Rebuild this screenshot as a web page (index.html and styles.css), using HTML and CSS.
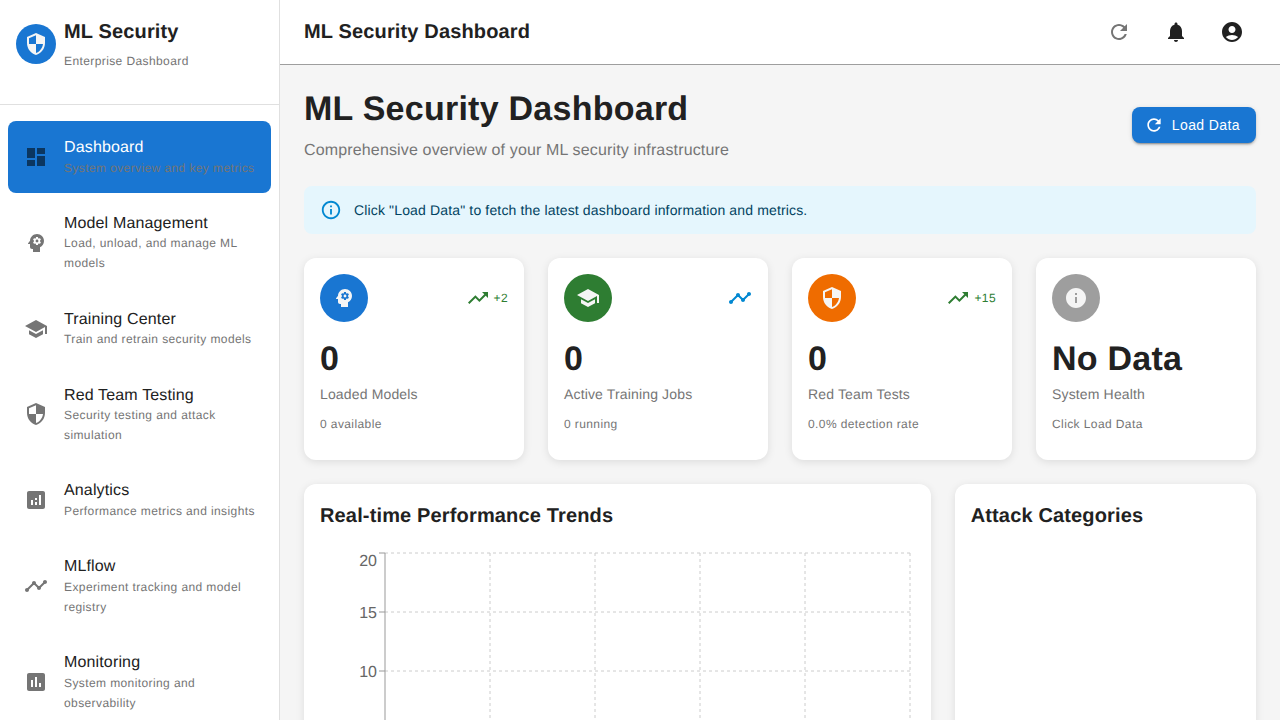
FILE: index.html
```html
<!DOCTYPE html>
<html>

<head>
  <meta charset="UTF-8">
  <meta name="viewport" content="width=device-width, initial-scale=1.0">
  <title>ML Security Dashboard</title>
  <link rel="stylesheet" href="styles.css">
</head>

<body>
  <svg class="sprite" xmlns="http://www.w3.org/2000/svg">
    <symbol id="i-security" viewBox="0 0 24 24"><path d="M12 1 3 5v6c0 5.55 3.84 10.74 9 12 5.16-1.26 9-6.45 9-12V5l-9-4zm0 10.99h7c-.53 4.12-3.28 7.79-7 8.94V12H5V6.3l7-3.11v8.8z"/></symbol>
    <symbol id="i-dashboard" viewBox="0 0 24 24"><path d="M3 13h8V3H3v10zm0 8h8v-6H3v6zm10 0h8V11h-8v10zm0-18v6h8V3h-8z"/></symbol>
    <symbol id="i-psychology" viewBox="0 0 24 24"><path d="M13 8.57c-.79 0-1.43.64-1.43 1.43s.64 1.43 1.43 1.43 1.43-.64 1.43-1.43-.64-1.43-1.43-1.43z"/><path d="M13 3C9.25 3 6.2 5.94 6.02 9.64L4.1 12.2c-.25.33-.01.8.4.8H6v3c0 1.1.9 2 2 2h1v3h7v-4.68c2.36-1.12 4-3.53 4-6.32 0-3.87-3.13-7-7-7zm3 7c0 .13-.01.26-.03.39l.83.66c.08.06.1.16.05.25l-.8 1.39c-.05.09-.16.12-.24.09l-.99-.4c-.21.16-.43.29-.67.39L14 13.83c-.01.1-.1.17-.2.17h-1.6c-.1 0-.18-.07-.2-.17l-.15-1.06c-.25-.1-.47-.23-.68-.39l-.99.4c-.09.03-.2 0-.25-.09l-.8-1.39c-.05-.08-.03-.19.05-.25l.84-.66c-.03-.13-.04-.26-.04-.39 0-.13.02-.27.04-.39l-.84-.66c-.08-.06-.1-.16-.05-.26l.8-1.38c.05-.09.15-.12.24-.09l1 .4c.2-.15.43-.29.67-.39L12 6.17c.02-.1.1-.17.2-.17h1.6c.1 0 .18.07.2.17l.15 1.06c.24.1.46.23.67.39l1-.4c.09-.03.2 0 .24.09l.8 1.38c.05.09.03.2-.05.26l-.83.66c.02.12.02.25.02.39z"/></symbol>
    <symbol id="i-school" viewBox="0 0 24 24"><path d="M5 13.18v4L12 21l7-3.82v-4L12 17l-7-3.82zM12 3 1 9l11 6 9-4.91V17h2V9L12 3z"/></symbol>
    <symbol id="i-analytics" viewBox="0 0 24 24"><path d="M19 3H5c-1.1 0-2 .9-2 2v14c0 1.1.9 2 2 2h14c1.1 0 2-.9 2-2V5c0-1.1-.9-2-2-2zM9 17H7v-5h2v5zm4 0h-2v-3h2v3zm0-5h-2v-2h2v2zm4 5h-2V7h2v10z"/></symbol>
    <symbol id="i-timeline" viewBox="0 0 24 24"><path d="M23 8c0 1.1-.9 2-2 2-.18 0-.35-.02-.51-.07l-3.56 3.55c.05.16.07.34.07.52 0 1.1-.9 2-2 2s-2-.9-2-2c0-.18.02-.36.07-.52l-2.55-2.55c-.16.05-.34.07-.52.07s-.36-.02-.52-.07l-4.55 4.56c.05.16.07.33.07.51 0 1.1-.9 2-2 2s-2-.9-2-2 .9-2 2-2c.18 0 .35.02.51.07l4.56-4.55C8.02 9.36 8 9.18 8 9c0-1.1.9-2 2-2s2 .9 2 2c0 .18-.02.36-.07.52l2.55 2.55c.16-.05.34-.07.52-.07s.36.02.52.07l3.55-3.56C19.02 8.35 19 8.18 19 8c0-1.1.9-2 2-2s2 .9 2 2z"/></symbol>
    <symbol id="i-assessment" viewBox="0 0 24 24"><path d="M19 3H5c-1.1 0-2 .9-2 2v14c0 1.1.9 2 2 2h14c1.1 0 2-.9 2-2V5c0-1.1-.9-2-2-2zM9 17H7v-7h2v7zm4 0h-2V7h2v10zm4 0h-2v-4h2v4z"/></symbol>
    <symbol id="i-refresh" viewBox="0 0 24 24"><path d="M17.65 6.35C16.2 4.9 14.21 4 12 4c-4.42 0-7.99 3.58-7.99 8s3.57 8 7.99 8c3.73 0 6.84-2.55 7.73-6h-2.08c-.82 2.33-3.04 4-5.65 4-3.31 0-6-2.69-6-6s2.69-6 6-6c1.66 0 3.14.69 4.22 1.78L13 11h7V4l-2.35 2.35z"/></symbol>
    <symbol id="i-bell" viewBox="0 0 24 24"><path d="M12 22c1.1 0 2-.9 2-2h-4c0 1.1.89 2 2 2zm6-6v-5c0-3.07-1.64-5.64-4.5-6.32V4c0-.83-.67-1.5-1.5-1.5s-1.5.67-1.5 1.5v.68C7.63 5.36 6 7.92 6 11v5l-2 2v1h16v-1l-2-2z"/></symbol>
    <symbol id="i-account" viewBox="0 0 24 24"><path d="M12 2C6.48 2 2 6.48 2 12s4.48 10 10 10 10-4.48 10-10S17.52 2 12 2zm0 4c1.93 0 3.5 1.57 3.5 3.5S13.93 13 12 13s-3.5-1.57-3.5-3.5S10.07 6 12 6zm0 14c-2.03 0-4.43-.82-6.14-2.88C7.55 15.8 9.68 15 12 15s4.45.8 6.14 2.12C16.43 19.18 14.03 20 12 20z"/></symbol>
    <symbol id="i-info-outline" viewBox="0 0 24 24"><path d="M11 7h2v2h-2zm0 4h2v6h-2zm1-9C6.48 2 2 6.48 2 12s4.48 10 10 10 10-4.48 10-10S17.52 2 12 2zm0 18c-4.41 0-8-3.59-8-8s3.59-8 8-8 8 3.59 8 8-3.59 8-8 8z"/></symbol>
    <symbol id="i-info" viewBox="0 0 24 24"><path d="M12 2C6.48 2 2 6.48 2 12s4.48 10 10 10 10-4.48 10-10S17.52 2 12 2zm1 15h-2v-6h2v6zm0-8h-2V7h2v2z"/></symbol>
    <symbol id="i-trending" viewBox="0 0 24 24"><path d="m16 6 2.29 2.29-4.88 4.88-4-4L2 16.59 3.41 18l6-6 4 4 6.3-6.29L22 12V6z"/></symbol>
  </svg>

  <div class="app">
    <aside class="sidebar">
      <div class="brand">
        <div class="avatar avatar-small avatar-blue"><svg class="icon"><use href="#i-security"/></svg></div>
        <div>
          <div class="brand-name">ML Security</div>
          <div class="brand-sub">Enterprise Dashboard</div>
        </div>
      </div>
      <nav class="nav">
        <a class="nav-item active">
          <svg class="icon nav-icon"><use href="#i-dashboard"/></svg>
          <div class="nav-text">
            <div class="nav-title">Dashboard</div>
            <div class="nav-sub">System overview and key metrics</div>
          </div>
        </a>
        <a class="nav-item">
          <svg class="icon nav-icon"><use href="#i-psychology"/></svg>
          <div class="nav-text">
            <div class="nav-title">Model Management</div>
            <div class="nav-sub">Load, unload, and manage ML models</div>
          </div>
        </a>
        <a class="nav-item">
          <svg class="icon nav-icon"><use href="#i-school"/></svg>
          <div class="nav-text">
            <div class="nav-title">Training Center</div>
            <div class="nav-sub">Train and retrain security models</div>
          </div>
        </a>
        <a class="nav-item">
          <svg class="icon nav-icon"><use href="#i-security"/></svg>
          <div class="nav-text">
            <div class="nav-title">Red Team Testing</div>
            <div class="nav-sub">Security testing and attack simulation</div>
          </div>
        </a>
        <a class="nav-item">
          <svg class="icon nav-icon"><use href="#i-analytics"/></svg>
          <div class="nav-text">
            <div class="nav-title">Analytics</div>
            <div class="nav-sub">Performance metrics and insights</div>
          </div>
        </a>
        <a class="nav-item">
          <svg class="icon nav-icon"><use href="#i-timeline"/></svg>
          <div class="nav-text">
            <div class="nav-title">MLflow</div>
            <div class="nav-sub">Experiment tracking and model registry</div>
          </div>
        </a>
        <a class="nav-item">
          <svg class="icon nav-icon"><use href="#i-assessment"/></svg>
          <div class="nav-text">
            <div class="nav-title">Monitoring</div>
            <div class="nav-sub">System monitoring and observability</div>
          </div>
        </a>
      </nav>
    </aside>

    <div class="content">
      <header class="topbar">
        <div class="topbar-title">ML Security Dashboard</div>
        <div class="topbar-actions">
          <button class="icon-btn muted"><svg class="icon"><use href="#i-refresh"/></svg></button>
          <button class="icon-btn"><svg class="icon"><use href="#i-bell"/></svg></button>
          <button class="icon-btn"><svg class="icon"><use href="#i-account"/></svg></button>
        </div>
      </header>

      <main class="main">
        <div class="page-head">
          <div>
            <h1 class="page-title">ML Security Dashboard</h1>
            <p class="page-sub">Comprehensive overview of your ML security infrastructure</p>
          </div>
          <button class="load-btn"><svg class="icon icon-20"><use href="#i-refresh"/></svg>Load Data</button>
        </div>

        <div class="alert">
          <svg class="icon alert-icon"><use href="#i-info-outline"/></svg>
          <span>Click "Load Data" to fetch the latest dashboard information and metrics.</span>
        </div>

        <div class="stats">
          <div class="card stat">
            <div class="stat-top">
              <div class="avatar avatar-blue"><svg class="icon"><use href="#i-psychology"/></svg></div>
              <div class="trend"><svg class="icon"><use href="#i-trending"/></svg><span>+2</span></div>
            </div>
            <div class="stat-value">0</div>
            <div class="stat-label">Loaded Models</div>
            <div class="stat-note">0 available</div>
          </div>
          <div class="card stat">
            <div class="stat-top">
              <div class="avatar avatar-green"><svg class="icon"><use href="#i-school"/></svg></div>
              <div class="trend trend-flat"><svg class="icon"><use href="#i-timeline"/></svg></div>
            </div>
            <div class="stat-value">0</div>
            <div class="stat-label">Active Training Jobs</div>
            <div class="stat-note">0 running</div>
          </div>
          <div class="card stat">
            <div class="stat-top">
              <div class="avatar avatar-orange"><svg class="icon"><use href="#i-security"/></svg></div>
              <div class="trend"><svg class="icon"><use href="#i-trending"/></svg><span>+15</span></div>
            </div>
            <div class="stat-value">0</div>
            <div class="stat-label">Red Team Tests</div>
            <div class="stat-note">0.0% detection rate</div>
          </div>
          <div class="card stat">
            <div class="stat-top">
              <div class="avatar avatar-grey"><svg class="icon"><use href="#i-info"/></svg></div>
            </div>
            <div class="stat-value">No Data</div>
            <div class="stat-label">System Health</div>
            <div class="stat-note">Click Load Data</div>
          </div>
        </div>

        <div class="charts">
          <div class="card chart-wide">
            <h2 class="card-title">Real-time Performance Trends</h2>
            <svg class="chart" viewBox="0 0 595 300" width="595" height="300">
              <g class="grid-lines">
                <line x1="65" y1="5" x2="590" y2="5"/>
                <line x1="65" y1="64" x2="590" y2="64"/>
                <line x1="65" y1="123" x2="590" y2="123"/>
                <line x1="65" y1="182" x2="590" y2="182"/>
                <line x1="170" y1="5" x2="170" y2="300"/>
                <line x1="275" y1="5" x2="275" y2="300"/>
                <line x1="380" y1="5" x2="380" y2="300"/>
                <line x1="485" y1="5" x2="485" y2="300"/>
                <line x1="590" y1="5" x2="590" y2="300"/>
              </g>
              <g class="axis">
                <line x1="65" y1="5" x2="65" y2="300"/>
                <line x1="59" y1="5" x2="65" y2="5"/>
                <line x1="59" y1="64" x2="65" y2="64"/>
                <line x1="59" y1="123" x2="65" y2="123"/>
                <line x1="59" y1="182" x2="65" y2="182"/>
              </g>
              <g class="ticks">
                <text x="57" y="18">20</text>
                <text x="57" y="70">15</text>
                <text x="57" y="129">10</text>
              </g>
            </svg>
          </div>
          <div class="card chart-narrow">
            <h2 class="card-title">Attack Categories</h2>
            <div class="chart-empty"></div>
          </div>
        </div>
      </main>
    </div>
  </div>
</body>

</html>
```

FILE: styles.css
```css
* {
  box-sizing: border-box;
}

body {
  margin: 0;
  height: 100vh;
  overflow: hidden;
  font-family: "Liberation Sans", Arial, sans-serif;
  text-rendering: geometricPrecision;
  color: #212121;
  background-color: #f5f5f5;
}

.sprite {
  display: none;
}

.icon {
  width: 24px;
  height: 24px;
  fill: currentColor;
  flex-shrink: 0;
}

.icon-20 {
  width: 20px;
  height: 20px;
}

.app {
  display: flex;
  height: 100vh;
  overflow: hidden;
}

/* sidebar */
.sidebar {
  width: 280px;
  flex-shrink: 0;
  background-color: #fff;
  border-right: 1px solid #e0e0e0;
  overflow: hidden;
}

.brand {
  display: flex;
  align-items: center;
  gap: 8px;
  height: 105px;
  padding: 16px 16px 34px;
  border-bottom: 1px solid #e0e0e0;
}

.brand-name {
  font-size: 20px;
  font-weight: 700;
  line-height: 32px;
  letter-spacing: 0.15px;
  margin-bottom: 3px;
}

.brand-sub {
  font-size: 12px;
  line-height: 20px;
  letter-spacing: 0.4px;
  color: #757575;
}

.nav {
  padding: 16px 8px 0;
}

.nav-item {
  display: flex;
  align-items: center;
  margin-bottom: 4px;
  padding: 14px 16px;
  border-radius: 8px;
  color: #212121;
}

.nav-item.active {
  background-color: #1976d2;
  color: #fff;
}

.nav-icon {
  margin-right: 16px;
  color: rgba(0, 0, 0, 0.54);
}

.nav-text {
  padding: 3px 0 0.4px;
}

.nav-title {
  font-size: 16px;
  line-height: 20.6px;
  letter-spacing: 0.15px;
}

.nav-sub {
  font-size: 12px;
  line-height: 1.66;
  letter-spacing: 0.4px;
  color: #757575;
}

/* top bar */
.content {
  flex: 1;
  min-width: 0;
  display: flex;
  flex-direction: column;
}

.topbar {
  display: flex;
  align-items: center;
  justify-content: space-between;
  height: 65px;
  flex-shrink: 0;
  padding: 0 28px 1px 24px;
  background-color: #fff;
  border-bottom: 1px solid #9e9e9e;
}

.topbar-title {
  font-size: 20px;
  font-weight: 700;
  letter-spacing: 0.15px;
  margin-top: 2px;
}

.topbar-actions {
  display: flex;
  gap: 16px;
}

.icon-btn {
  width: 40px;
  height: 40px;
  padding: 8px;
  border: none;
  background: none;
  color: #212121;
}

.icon-btn.muted {
  color: #757575;
  margin-right: 1px;
}

/* page */
.main {
  flex: 1;
  padding: 24px;
  overflow: hidden;
}

.page-head {
  display: flex;
  justify-content: space-between;
  align-items: center;
  margin-bottom: 23px;
}

.page-title {
  margin: 0 0 10px;
  font-size: 34px;
  font-weight: 700;
  line-height: 40px;
  letter-spacing: 0.25px;
}

.page-sub {
  margin: 0;
  font-size: 16px;
  line-height: 24px;
  letter-spacing: 0.15px;
  color: #757575;
}

.load-btn {
  display: flex;
  align-items: center;
  gap: 8px;
  height: 36px;
  margin-top: -2px;
  padding: 0 16px 0 12px;
  border: none;
  border-radius: 8px;
  background-color: #1976d2;
  color: #fff;
  font-family: inherit;
  font-size: 14px;
  letter-spacing: 0.4px;
  box-shadow: 0 3px 1px -2px rgba(0, 0, 0, 0.2), 0 2px 2px 0 rgba(0, 0, 0, 0.14), 0 1px 5px 0 rgba(0, 0, 0, 0.12);
}

.alert {
  display: flex;
  align-items: center;
  height: 48px;
  margin-bottom: 24px;
  padding: 0 16px;
  border-radius: 8px;
  background-color: #e5f6fd;
  color: #014361;
  font-size: 14px;
  letter-spacing: 0.15px;
}

.alert-icon {
  width: 22px;
  height: 22px;
  margin-right: 12px;
  color: #0288d1;
}

.card {
  border-radius: 12px;
  background-color: #fff;
  box-shadow: 0 2px 8px rgba(0, 0, 0, 0.1);
}

.stats {
  display: grid;
  grid-template-columns: repeat(4, 1fr);
  gap: 24px;
  margin-bottom: 24px;
}

.stat {
  height: 202px;
  padding: 16px;
}

.stat-top {
  display: flex;
  justify-content: space-between;
  align-items: center;
  margin-bottom: 16px;
}

.avatar {
  display: flex;
  align-items: center;
  justify-content: center;
  width: 48px;
  height: 48px;
  border-radius: 50%;
  color: #f5f5f5;
  flex-shrink: 0;
}

.avatar-small {
  width: 40px;
  height: 40px;
  margin-top: 2px;
}

.avatar-blue {
  background-color: #1976d2;
}

.avatar-green {
  background-color: #2e7d32;
}

.avatar-orange {
  background-color: #ef6c00;
}

.avatar-grey {
  background-color: #9e9e9e;
}

.trend {
  display: flex;
  align-items: center;
  gap: 4px;
  color: #2e7d32;
  font-size: 12px;
  letter-spacing: 0.4px;
}

.trend-flat {
  color: #0288d1;
}

.stat-value {
  font-size: 34px;
  font-weight: 700;
  line-height: 42px;
  letter-spacing: 0.25px;
  margin-bottom: 4px;
}

.stat-label {
  font-size: 14px;
  line-height: 20px;
  letter-spacing: 0.15px;
  color: #757575;
  margin-bottom: 10px;
}

.stat-note {
  font-size: 12px;
  line-height: 20px;
  letter-spacing: 0.4px;
  color: #757575;
}

.charts {
  display: grid;
  grid-template-columns: repeat(12, 1fr);
  gap: 24px;
}

.chart-wide {
  grid-column: span 8;
  padding: 16px;
}

.chart-narrow {
  grid-column: span 4;
  padding: 16px;
}

.card-title {
  margin: 0 0 16px;
  font-size: 20px;
  font-weight: 700;
  line-height: 32px;
  letter-spacing: 0.15px;
}

.chart {
  display: block;
}

.chart-empty {
  height: 300px;
}

.grid-lines line {
  stroke: #ccc;
  stroke-dasharray: 3 3;
}

.axis line {
  stroke: #999;
}

.ticks text {
  fill: #666;
  font-size: 16px;
  text-anchor: end;
}
```
